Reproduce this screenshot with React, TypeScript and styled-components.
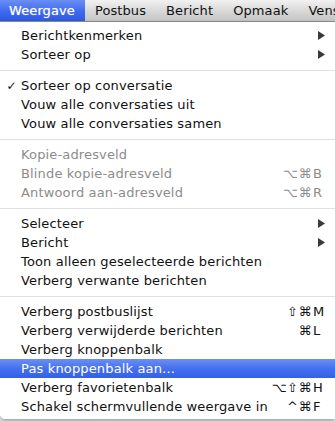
import styled, { createGlobalStyle } from 'styled-components'

type Item =
  | { kind: 'sep' }
  | {
      kind: 'item'
      label: string
      checked?: boolean
      disabled?: boolean
      active?: boolean
      submenu?: boolean
      mods?: string
      key?: string
    }

const menuTitles = ['Weergave', 'Postbus', 'Bericht', 'Opmaak', 'Venster']

const items: Item[] = [
  { kind: 'item', label: 'Berichtkenmerken', submenu: true },
  { kind: 'item', label: 'Sorteer op', submenu: true },
  { kind: 'sep' },
  { kind: 'item', label: 'Sorteer op conversatie', checked: true },
  { kind: 'item', label: 'Vouw alle conversaties uit' },
  { kind: 'item', label: 'Vouw alle conversaties samen' },
  { kind: 'sep' },
  { kind: 'item', label: 'Kopie-adresveld', disabled: true },
  { kind: 'item', label: 'Blinde kopie-adresveld', disabled: true, mods: '⌥⌘', key: 'B' },
  { kind: 'item', label: 'Antwoord aan-adresveld', disabled: true, mods: '⌥⌘', key: 'R' },
  { kind: 'sep' },
  { kind: 'item', label: 'Selecteer', submenu: true },
  { kind: 'item', label: 'Bericht', submenu: true },
  { kind: 'item', label: 'Toon alleen geselecteerde berichten' },
  { kind: 'item', label: 'Verberg verwante berichten' },
  { kind: 'sep' },
  { kind: 'item', label: 'Verberg postbuslijst', mods: '⇧⌘', key: 'M' },
  { kind: 'item', label: 'Verberg verwijderde berichten', mods: '⌘', key: 'L' },
  { kind: 'item', label: 'Verberg knoppenbalk' },
  { kind: 'item', label: 'Pas knoppenbalk aan…', active: true },
  { kind: 'item', label: 'Verberg favorietenbalk', mods: '⌥⇧⌘', key: 'H' },
  { kind: 'item', label: 'Schakel schermvullende weergave in', mods: '^⌘', key: 'F' },
]

const App = () => {
  return (
    <>
      <GlobalStyle />
      <StyledScreen>
        <StyledMenuBar>
          {menuTitles.map((title, i) => (
            <StyledMenuTitle key={title} $open={i === 0}>
              {title}
            </StyledMenuTitle>
          ))}
        </StyledMenuBar>
        <StyledMenu>
          {items.map((item, i) =>
            item.kind === 'sep' ? (
              <StyledSeparator key={i} />
            ) : (
              <StyledRow key={i} $disabled={item.disabled} $active={item.active}>
                <StyledCheck>{item.checked ? '✓' : ''}</StyledCheck>
                <StyledLabel>{item.label}</StyledLabel>
                <StyledMods>{item.mods}</StyledMods>
                {item.submenu ? (
                  <StyledArrow viewBox="0 0 7 9">
                    <polygon points="0,0 7,4.5 0,9" />
                  </StyledArrow>
                ) : (
                  <StyledKey>{item.key}</StyledKey>
                )}
              </StyledRow>
            ),
          )}
        </StyledMenu>
      </StyledScreen>
    </>
  )
}

export default App

const GlobalStyle = createGlobalStyle`
  html, body {
    margin: 0;
    padding: 0;
    background: #ededed;
  }
  body {
    font-family: 'DejaVu Sans', 'Liberation Sans', sans-serif;
  }
`

const StyledScreen = styled.div`
  width: 335px;
  height: 421px;
  overflow: hidden;
  display: flex;
  flex-direction: column;
`

const StyledMenuBar = styled.div`
  display: flex;
  height: 22px;
  box-sizing: border-box;
  background: linear-gradient(#f2f2f2, #d9d9d9 50%, #c4c4c4);
  border-bottom: 1px solid #8e8e8e;
  white-space: nowrap;
  flex-shrink: 0;
  overflow: hidden;
`

const StyledMenuTitle = styled.div<{ $open?: boolean }>`
  padding: 0 10px;
  line-height: 21px;
  font-size: 13px;
  letter-spacing: 0.1px;
  color: ${(p) => (p.$open ? '#fff' : '#111')};
  background: ${(p) =>
    p.$open ? 'linear-gradient(#6a8ff5, #3f69ee 55%, #2c58e6)' : 'transparent'};
  text-shadow: ${(p) => (p.$open ? '0 0 1px rgba(255,255,255,0.6)' : 'none')};

  &:first-child {
    padding-left: 9px;
  }
`

const StyledMenu = styled.div`
  width: 335px;
  box-sizing: border-box;
  padding: 4px 0 3px;
  background: rgba(255, 255, 255, 0.97);
  border-radius: 0 0 0 5px;
  box-shadow: 0 2px 4px rgba(0, 0, 0, 0.35);
`

const StyledSeparator = styled.div`
  height: 12px;
  display: flex;
  align-items: center;

  &::after {
    content: '';
    flex: 1;
    height: 1px;
    margin-top: 1px;
    background: #e0e0e0;
  }
`

const StyledRow = styled.div<{ $disabled?: boolean; $active?: boolean }>`
  display: grid;
  grid-template-columns: 21px 1fr auto 13px;
  align-items: center;
  height: 19px;
  padding-right: 10px;
  font-size: 13px;
  white-space: nowrap;
  color: ${(p) => (p.$active ? '#fff' : p.$disabled ? '#8c8c8c' : '#111')};
  fill: ${(p) => (p.$active ? '#fff' : '#3a3a3a')};
  background: ${(p) =>
    p.$active ? 'linear-gradient(#6c8ff4, #4670ee 50%, #3260e8)' : 'transparent'};
`

const StyledCheck = styled.span`
  font-size: 12px;
  text-align: center;
  padding-left: 2px;
`

const StyledLabel = styled.span`
  line-height: 19px;
  letter-spacing: 0.15px;
`

const StyledMods = styled.span`
  text-align: right;
  letter-spacing: 0.5px;
`

const StyledKey = styled.span`
  padding-left: 1px;
`

const StyledArrow = styled.svg`
  width: 7px;
  height: 9px;
  justify-self: end;
`
